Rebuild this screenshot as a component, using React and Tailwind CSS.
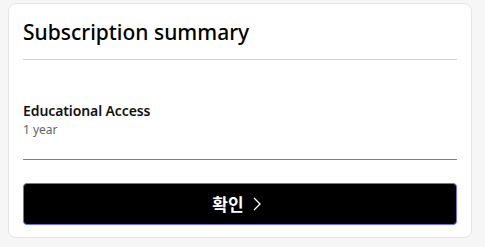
import React from "react"

const App = () => {
    return (
        <div className="w-[485px] h-[247px] bg-[#f6f6f6] pl-2 pt-[3px]" style={{ fontFamily: '"Noto Sans", "Noto Sans CJK KR", sans-serif' }}>
            <div className="w-[464px] h-[235px] bg-white border border-[#e4e4e4] rounded-lg px-[14px]">
                <div className="pt-[14px] pb-[13px] border-b border-[#d6d6d6]">
                    <h2 className="text-[21px] leading-[28px] font-medium text-black">Subscription summary</h2>
                </div>
                <div className="pt-[41px] pb-[21px] border-b border-[#808080]">
                    <p className="text-[14px] leading-[20px] font-semibold text-[#111] tracking-[-0.1px]">Educational Access</p>
                    <p className="text-[12px] leading-[17px] text-[#666]">1 year</p>
                </div>
                <button className="mt-[23px] w-full h-[42px] bg-black border border-[#6b6bf0] rounded-[4px] flex items-center justify-center gap-[9px] pr-[7px] text-white">
                    <span className="text-[17px] leading-[20px] font-bold" style={{ fontFamily: '"Noto Sans CJK KR", sans-serif' }}>확인</span>
                    <svg width="8" height="14" viewBox="0 0 8 14" fill="none" stroke="white" strokeWidth="1.4">
                        <path d="M1 1l6 6-6 6" />
                    </svg>
                </button>
            </div>
        </div>
    )
}

export default App
